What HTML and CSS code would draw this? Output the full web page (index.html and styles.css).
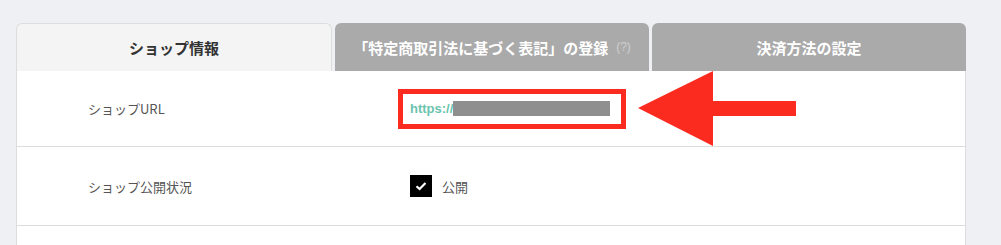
FILE: index.html
```html
<!DOCTYPE html>
<html lang="ja">
<head>
  <meta charset="UTF-8">
  <title>ショップ情報</title>
  <link rel="stylesheet" href="styles.css">
</head>
<body>
  <div class="wrap">
    <div class="tabs">
      <div class="tab active">ショップ情報</div>
      <div class="tab">「特定商取引法に基づく表記」の登録<span class="help">(?)</span></div>
      <div class="tab">決済方法の設定</div>
    </div>
    <div class="panel">
      <div class="row row-url">
        <div class="label">ショップURL</div>
        <div class="value">
          <span class="url-box"><span class="url">https://</span><span class="mask"></span></span>
        </div>
        <svg class="arrow" width="158" height="75" viewBox="0 0 158 75">
          <polygon points="0,37 75,0 75,30 158,30 158,45 75,45 75,75" fill="#fc2b20"/>
        </svg>
      </div>
      <div class="row row-status">
        <div class="label">ショップ公開状況</div>
        <div class="value">
          <span class="check">
            <svg width="12" height="10" viewBox="0 0 12 10"><path d="M1.5 5.2 L4.6 8 L10.5 2" fill="none" stroke="#fff" stroke-width="2.2"/></svg>
          </span>
          <span class="check-label">公開</span>
        </div>
      </div>
      <div class="row row-next"></div>
    </div>
  </div>
</body>
</html>
```

FILE: styles.css
```css
body{
  margin: 0;
  background-color: #eff0f4;
  font-family: "Noto Sans CJK JP", "Liberation Sans", sans-serif;
  color: #555;
}
.wrap{
  width: 950px;
  padding: 23px 0 0 16px;
}
.tabs{
  display: grid;
  grid-template-columns: 316px 314px 314px;
  gap: 3px;
  height: 48px;
}
.tab{
  display: flex;
  align-items: center;
  justify-content: center;
  background-color: #aaaaaa;
  color: #fff;
  font-size: 15px;
  font-weight: bold;
  border-radius: 6px 6px 0 0;
}
.tab.active{
  background-color: #f4f4f4;
  color: #333;
  border: 1px solid #dddddd;
  border-bottom: none;
}
.help{
  font-size: 12px;
  font-weight: normal;
  color: #cfcfcf;
  margin-left: 8px;
  font-family: "Liberation Sans", sans-serif;
}
.panel{
  background-color: #fff;
  border: 1px solid #dddddd;
  border-top: none;
}
.row{
  position: relative;
  display: grid;
  grid-template-columns: 393px 1fr;
  align-items: center;
  border-bottom: 1px solid #dddddd;
}
.row-url{
  height: 75px;
}
.row-status{
  height: 78px;
}
.row-next{
  height: 30px;
  border-bottom: none;
}
.label{
  padding-left: 71px;
  font-size: 13px;
  color: #555;
}
.value{
  display: flex;
  align-items: center;
}
.url-box{
  display: inline-flex;
  align-items: center;
  box-sizing: border-box;
  width: 228px;
  height: 40px;
  margin-left: -12px;
  padding-left: 7px;
  border: 5px solid #fc2b20;
}
.url{
  font-family: "Liberation Sans", sans-serif;
  font-size: 13px;
  font-weight: bold;
  color: #6ac4ae;
}
.mask{
  display: inline-block;
  width: 157px;
  height: 15px;
  background-color: #8f8f8f;
}
.arrow{
  position: absolute;
  left: 621px;
  top: 0;
}
.check{
  display: inline-flex;
  align-items: center;
  justify-content: center;
  width: 22px;
  height: 22px;
  background-color: #000;
}
.check-label{
  margin-left: 10px;
  font-size: 13px;
  color: #555;
}
```
